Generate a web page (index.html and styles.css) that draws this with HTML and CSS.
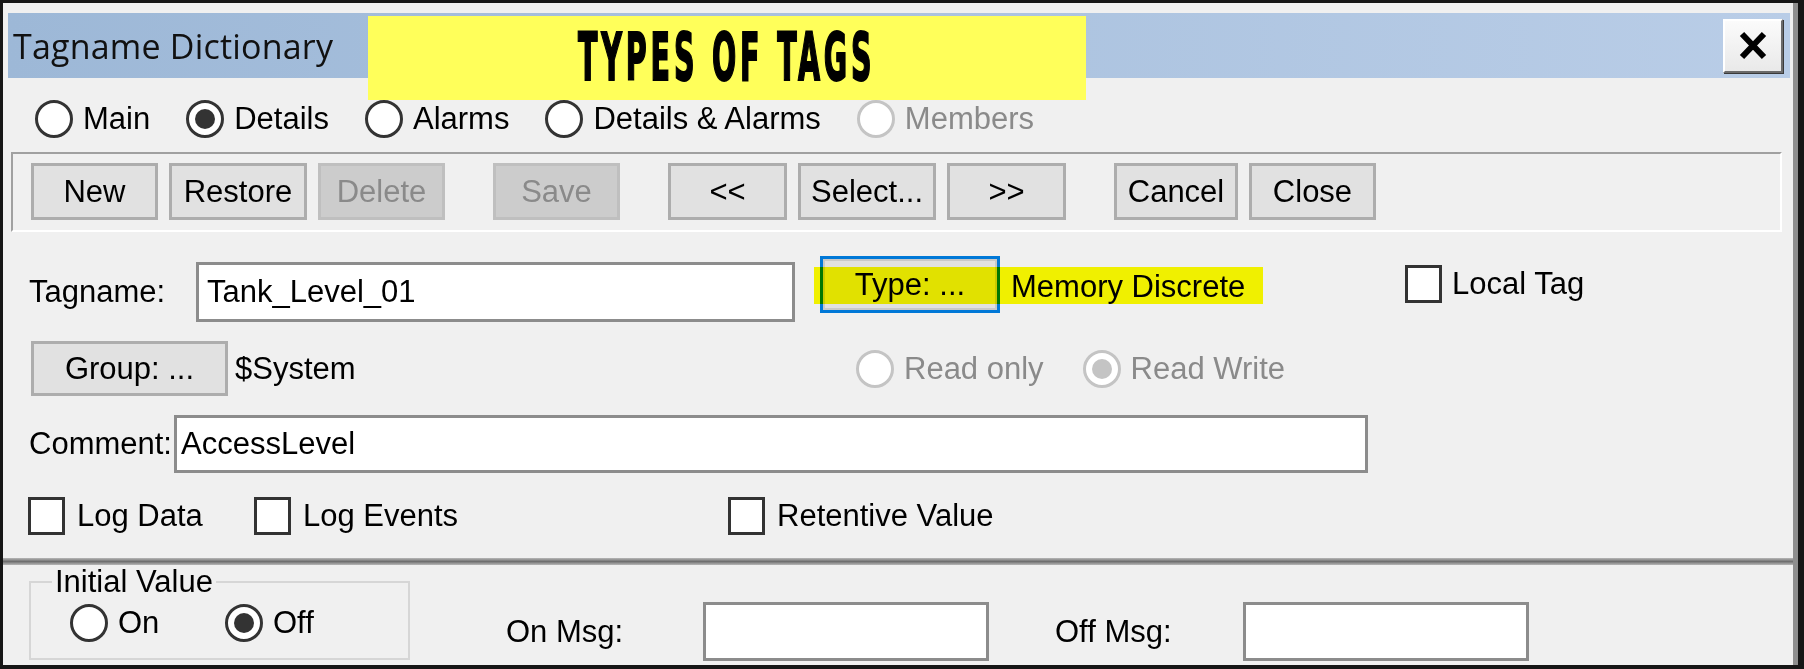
FILE: index.html
```html
<!DOCTYPE html>
<html>
<head>
  <title>Tagname Dictionary</title>
  <link rel="stylesheet" href="styles.css">
</head>
<body>
  <div class="window">
    <div class="titlebar">
      <span class="title">Tagname Dictionary</span>
      <button class="close" aria-label="Close">
        <svg width="28" height="29" viewBox="0 0 28 29">
          <path d="M3 3 L25 26 M25 3 L3 26" stroke="#000" stroke-width="6" fill="none" />
        </svg>
      </button>
    </div>

    <div class="banner"><span>TYPES OF TAGS</span></div>

    <div class="tabs">
      <label class="opt"><span class="radio"></span>Main</label>
      <label class="opt"><span class="radio on"></span>Details</label>
      <label class="opt"><span class="radio"></span>Alarms</label>
      <label class="opt"><span class="radio"></span>Details &amp; Alarms</label>
      <label class="opt disabled"><span class="radio"></span>Members</label>
    </div>

    <div class="toolbar">
      <button class="btn">New</button>
      <button class="btn wide">Restore</button>
      <button class="btn" disabled>Delete</button>
      <button class="btn spaced" disabled>Save</button>
      <button class="btn nav spaced">&lt;&lt;</button>
      <button class="btn wide">Select...</button>
      <button class="btn nav">&gt;&gt;</button>
      <button class="btn cancel spaced">Cancel</button>
      <button class="btn">Close</button>
    </div>

    <div class="details">
      <div class="row row-tag">
        <span class="lbl lbl-tag">Tagname:</span>
        <input class="field field-tag" type="text" value="Tank_Level_01">
        <div class="typegroup">
          <button class="btn btn-type">Type: ...</button>
          <span class="type-name">Memory Discrete</span>
        </div>
        <label class="opt local-tag"><span class="check"></span>Local Tag</label>
      </div>

      <div class="row row-group">
        <div class="group-col">
          <button class="btn btn-group">Group: ...</button>
          <span class="group-name">$System</span>
        </div>
        <label class="opt disabled access"><span class="radio"></span>Read only</label>
        <label class="opt disabled"><span class="radio on"></span>Read Write</label>
      </div>

      <div class="row row-comment">
        <span class="lbl lbl-comment">Comment:</span>
        <input class="field field-comment" type="text" value="AccessLevel">
      </div>

      <div class="row row-checks">
        <label class="opt opt-logdata"><span class="check"></span>Log Data</label>
        <label class="opt opt-logevents"><span class="check"></span>Log Events</label>
        <label class="opt"><span class="check"></span>Retentive Value</label>
      </div>
    </div>

    <div class="highlight"></div>

    <div class="separator"></div>

    <div class="initial">
      <fieldset class="groupbox">
        <legend>Initial Value</legend>
        <div class="groupbox-row">
          <label class="opt opt-on"><span class="radio"></span>On</label>
          <label class="opt"><span class="radio on"></span>Off</label>
        </div>
      </fieldset>

      <div class="msgs">
        <span class="msg-lbl msg-on">On Msg:</span>
        <input class="field field-msg" type="text">
        <span class="msg-lbl msg-off">Off Msg:</span>
        <input class="field field-msg" type="text">
      </div>
    </div>
  </div>
</body>
</html>
```

FILE: styles.css
```css
body {
  margin: 0;
  background: #000;
}

.window {
  position: relative;
  box-sizing: border-box;
  width: 1804px;
  height: 669px;
  border: 3px solid #161616;
  border-right-width: 6px;
  border-bottom-width: 4px;
  padding: 10px 8px 0 5px;
  background: #f0f0f0;
  box-shadow: inset -5px 0 0 #8e8e8e;
  overflow: hidden;
  font-family: "Liberation Sans", Arial, sans-serif;
  font-size: 31px;
  color: #000;
}

/* title bar */
.titlebar {
  height: 65px;
  display: flex;
  align-items: center;
  justify-content: space-between;
  padding: 0 7px 0 5px;
  background: linear-gradient(90deg, #9db8d7, #b9cde7);
}

.title {
  font-family: "Open Sans", "Noto Sans", sans-serif;
  font-size: 34px;
  letter-spacing: 0.2px;
  color: #111;
}

.close {
  width: 60px;
  height: 54px;
  box-sizing: border-box;
  padding: 0;
  display: flex;
  align-items: center;
  justify-content: center;
  background: linear-gradient(#fbfbfb, #e9e9e9);
  border: 2px solid;
  border-color: #fff #6a6a6a #6a6a6a #fff;
  box-shadow: 1px 1px 0 #3a3a3a;
}

.banner {
  position: absolute;
  left: 365px;
  top: 13px;
  width: 718px;
  height: 84px;
  background: #ffff5a;
  display: flex;
  align-items: center;
  justify-content: center;
}

.banner span {
  font-family: "DejaVu Sans Condensed", "DejaVu Sans", sans-serif;
  font-weight: bold;
  font-size: 66px;
  letter-spacing: 8px;
  line-height: 1;
  -webkit-text-stroke: 2px #000;
  transform: scaleX(0.48);
  white-space: nowrap;
}

/* radios and checkboxes */
.opt {
  display: flex;
  align-items: center;
  gap: 10px;
  white-space: nowrap;
}

.opt.disabled {
  color: #8a8a8a;
}

.radio {
  flex: none;
  width: 38px;
  height: 38px;
  box-sizing: border-box;
  border: 3px solid #333;
  border-radius: 50%;
  background: #fff;
  display: flex;
  align-items: center;
  justify-content: center;
}

.radio.on::after {
  content: "";
  width: 20px;
  height: 20px;
  border-radius: 50%;
  background: #333;
}

.disabled .radio {
  border-color: #c4c4c4;
}

.disabled .radio.on::after {
  background: #c4c4c4;
}

.check {
  flex: none;
  width: 37px;
  height: 38px;
  box-sizing: border-box;
  border: 3px solid #333;
  background: #fff;
}

.tabs {
  height: 74px;
  box-sizing: border-box;
  padding: 8px 0 0 27px;
  display: flex;
  align-items: center;
  gap: 36px;
}

/* toolbar */
.toolbar {
  height: 80px;
  box-sizing: border-box;
  margin: 0 8px 0 3px;
  padding: 9px 0 0 18px;
  border: 2px solid;
  border-color: #a0a0a0 #fff #fff #a0a0a0;
  display: flex;
  align-items: flex-start;
  gap: 11px;
}

.btn {
  width: 127px;
  height: 57px;
  box-sizing: border-box;
  padding: 0;
  border: 3px solid #adadad;
  background: #e1e1e1;
  font: inherit;
  color: #000;
}

.btn:disabled {
  background: #cccccc;
  border-color: #bfbfbf;
  color: #8a8a8a;
}

.btn.wide {
  width: 138px;
}

.btn.nav {
  width: 119px;
}

.btn.cancel {
  width: 124px;
}

.btn.spaced {
  margin-left: 37px;
}

/* details */
.details {
  padding: 0 0 24px 21px;
}

.row {
  display: flex;
  align-items: center;
}

.row-tag {
  margin-top: 30px;
  height: 60px;
}

.lbl-tag {
  width: 167px;
}

.field {
  box-sizing: border-box;
  border: 3px solid #8c8c8c;
  background: #fff;
  padding: 0 0 0 8px;
  margin: 0;
  font: inherit;
  color: #000;
  outline: none;
}

.field-tag {
  width: 599px;
  height: 60px;
}

.typegroup {
  align-self: flex-start;
  margin: -6px 0 0 25px;
  width: 585px;
  height: 57px;
  display: flex;
  align-items: center;
}

.btn-type {
  width: 180px;
  border-color: #0078d7;
  box-shadow: inset 0 0 0 2px #c9c9c9;
}

.type-name {
  margin: 4px 0 0 11px;
}

.local-tag {
  align-self: flex-start;
  margin-top: 3px;
}

.row-group {
  margin-top: 19px;
  height: 55px;
}

.group-col {
  width: 827px;
  display: flex;
  align-items: center;
}

.btn-group {
  width: 197px;
  height: 55px;
  margin-left: 2px;
}

.group-name {
  margin-left: 7px;
}

.access {
  margin-right: 39px;
}

.row-comment {
  margin-top: 19px;
  height: 58px;
}

.lbl-comment {
  width: 145px;
}

.field-comment {
  width: 1194px;
  height: 58px;
  padding-left: 4px;
}

.row-checks {
  margin: 24px 0 0 -1px;
  height: 37px;
}

.row-checks .opt {
  gap: 12px;
}

.opt-logdata {
  width: 226px;
}

.opt-logevents {
  width: 474px;
}

.highlight {
  position: absolute;
  left: 811px;
  top: 264px;
  width: 449px;
  height: 37px;
  background: #ffff00;
  mix-blend-mode: multiply;
}

.separator {
  height: 7px;
  margin: 0 -3px 0 -5px;
  background: linear-gradient(#b8b8b8, #6f6f6f 50%, #b8b8b8);
}

/* initial value */
.initial {
  display: flex;
  align-items: flex-start;
  padding: 2px 0 0 21px;
}

.groupbox {
  box-sizing: border-box;
  width: 381px;
  margin: 0;
  padding: 7px 0 16px 39px;
  border: 2px solid #d6d6d6;
}

.groupbox legend {
  margin-left: -18px;
  padding: 0 3px;
  line-height: 30px;
}

.groupbox-row {
  display: flex;
  align-items: center;
}

.opt-on {
  width: 155px;
}

.msgs {
  margin: 35px 0 0 96px;
  display: flex;
  align-items: center;
}

.msg-lbl {
  white-space: nowrap;
}

.msg-on {
  width: 197px;
}

.msg-off {
  width: 188px;
  margin-left: 66px;
}

.field-msg {
  width: 286px;
  height: 59px;
}
```
